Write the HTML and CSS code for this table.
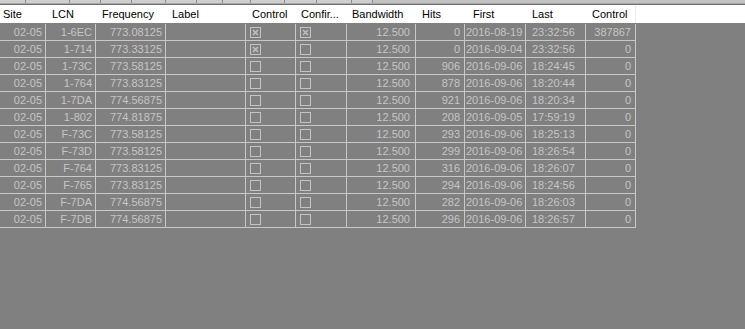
FILE: index.html
```html
<!DOCTYPE html>
<html>
<head>
<meta charset="utf-8">
<link rel="stylesheet" href="styles.css">
</head>
<body>
<div class="tabs">
  <div class="tab w26"></div><div class="tab w44"></div><div class="tab w31"></div><div class="tab w31"></div><div class="tab w34"></div><div class="tab w31"></div><div class="tab w26"></div><div class="tab w28"></div><div class="tab w34"></div><div class="tab w32"></div><div class="tab w35"></div><div class="tab w21"></div>
</div>
<div class="rule"></div>
<div class="header">
  <div class="hc c-site">Site</div>
  <div class="hc c-lcn">LCN</div>
  <div class="hc c-freq">Frequency</div>
  <div class="hc c-label">Label</div>
  <div class="hc c-ctl">Control</div>
  <div class="hc c-conf">Confir...</div>
  <div class="hc c-bw">Bandwidth</div>
  <div class="hc c-hits">Hits</div>
  <div class="hc c-first">First</div>
  <div class="hc c-last">Last</div>
  <div class="hc c-ctl2 hlast">Control</div>
</div>
<div class="grid" id="grid"></div>
<script src="app.js"></script>
</body>
</html>
```
FILE: app.js
```js
var rows = [
  ["02-05","1-6EC","773.08125","",1,1,"12.500","0","2016-08-19","23:32:56","387867"],
  ["02-05","1-714","773.33125","",1,0,"12.500","0","2016-09-04","23:32:56","0"],
  ["02-05","1-73C","773.58125","",0,0,"12.500","906","2016-09-06","18:24:45","0"],
  ["02-05","1-764","773.83125","",0,0,"12.500","878","2016-09-06","18:20:44","0"],
  ["02-05","1-7DA","774.56875","",0,0,"12.500","921","2016-09-06","18:20:34","0"],
  ["02-05","1-802","774.81875","",0,0,"12.500","208","2016-09-05","17:59:19","0"],
  ["02-05","F-73C","773.58125","",0,0,"12.500","293","2016-09-06","18:25:13","0"],
  ["02-05","F-73D","773.58125","",0,0,"12.500","299","2016-09-06","18:26:54","0"],
  ["02-05","F-764","773.83125","",0,0,"12.500","316","2016-09-06","18:26:07","0"],
  ["02-05","F-765","773.83125","",0,0,"12.500","294","2016-09-06","18:24:56","0"],
  ["02-05","F-7DA","774.56875","",0,0,"12.500","282","2016-09-06","18:26:03","0"],
  ["02-05","F-7DB","774.56875","",0,0,"12.500","296","2016-09-06","18:26:57","0"]
];
var cls = ["c-site r","c-lcn r","c-freq r","c-label","c-ctl cb","c-conf cb","c-bw r","c-hits r","c-first","c-last","c-ctl2 r"];
function box(on){
  var s = '<svg class="chk" width="11" height="11" viewBox="0 0 11 11"><rect x="0.5" y="0.5" width="10" height="10" fill="none" stroke="#c4c4c4"/>';
  if(on){ s += '<path d="M3 3 L8 8 M8 3 L3 8" stroke="#bdbdbd" stroke-width="1.6"/>'; }
  return s + '</svg>';
}
var html = "";
rows.forEach(function(r){
  html += '<div class="row">';
  r.forEach(function(v,i){
    var content = (i===4||i===5) ? box(v) : v;
    html += '<div class="dc ' + cls[i] + '">' + content + '</div>';
  });
  html += '</div>';
});
document.getElementById("grid").innerHTML = html;
```
FILE: styles.css
```css
html, body {
  margin: 0;
  padding: 0;
  background: #808080;
  width: 745px;
  height: 329px;
  overflow: hidden;
  font-family: "Liberation Sans", Arial, sans-serif;
  font-size: 11px;
}
.tabs {
  display: flex;
  height: 3px;
  background: #c3c3c3;
}
.tab {
  box-sizing: border-box;
  height: 3px;
  background: #cfcfcf;
  border-right: 1px solid #8c8c8c;
}
.w26 { width: 26px; } .w44 { width: 44px; } .w31 { width: 31px; } .w34 { width: 34px; }
.w28 { width: 28px; } .w32 { width: 32px; } .w35 { width: 35px; } .w21 { width: 21px; }
.rule {
  height: 2px;
  background: linear-gradient(#a6a6a6 0 1px, #707070 1px 2px);
}
.header {
  display: flex;
  height: 18px;
  background: #ffffff;
  color: #000;
}
.hc {
  box-sizing: border-box;
  line-height: 18px;
  padding-left: 6px;
  white-space: nowrap;
  overflow: hidden;
}
.hlast { border-right: 1px solid #ececec; }
.grid {
  border-top: 1px solid #808080;
  width: 636px;
}
.row {
  display: flex;
  height: 17px;
  box-sizing: border-box;
  border-bottom: 1px solid #c8c8c8;
}
.dc {
  box-sizing: border-box;
  height: 16px;
  line-height: 16px;
  color: #c6c6c6;
  border-right: 1px solid #c8c8c8;
  white-space: nowrap;
  overflow: hidden;
  padding: 0 3px 0 1px;
}
.dc.r { text-align: right; }
.dc.cb { padding: 0 0 0 4px; display: flex; align-items: center; }
.chk { display: block; }
.c-site { width: 46px; }
.c-lcn { width: 50px; }
.c-freq { width: 70px; }
.c-label { width: 80px; }
.c-ctl { width: 50px; }
.c-conf { width: 51px; }
.c-bw { width: 69px; }
.c-hits { width: 49px; }
.c-first { width: 61px; }
.c-last { width: 60px; }
.c-ctl2 { width: 50px; }
.hc.c-site { padding-left: 3px; }
.hc.c-conf { padding-left: 5px; }
.hc.c-bw { padding-left: 5px; }
.hc.c-first { padding-left: 8px; }
.dc.c-last { padding-left: 6px; }
.dc.c-hits { padding-right: 4px; }
.dc.c-bw { padding-right: 5px; }
.dc.c-ctl2 { padding-right: 4px; }
```
